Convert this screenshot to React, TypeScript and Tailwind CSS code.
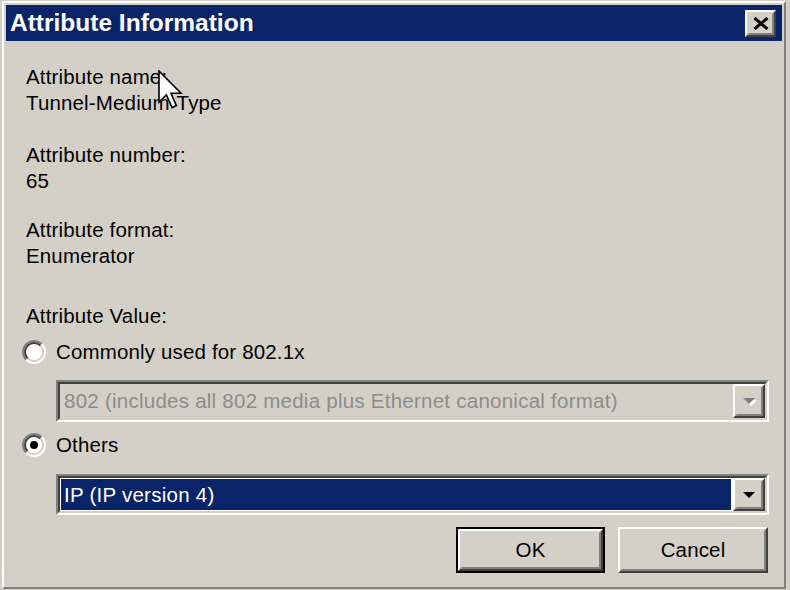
import React from "react";

function Raised({ children, className = "" }: { children?: React.ReactNode; className?: string }) {
  return (
    <div className={"border-2 border-t-white border-l-white border-r-[#404040] border-b-[#404040] bg-[#d4d0c8] " + className}>
      <div className="w-full h-full border-2 border-t-[#d4d0c8] border-l-[#d4d0c8] border-r-[#808080] border-b-[#808080] flex items-center justify-center">
        {children}
      </div>
    </div>
  );
}

function Arrow({ disabled }: { disabled?: boolean }) {
  return (
    <svg width="16" height="10" viewBox="0 0 16 10">
      {disabled && <polygon points="4,4 16,4 10,10" fill="#ffffff" />}
      <polygon points="2,2 14,2 8,8" fill={disabled ? "#808080" : "#000000"} />
    </svg>
  );
}

function Combo({ disabled, text }: { disabled?: boolean; text: string }) {
  return (
    <div className="h-full border-2 border-t-[#808080] border-l-[#808080] border-b-white border-r-white">
      <div className={"h-full border-2 border-t-[#404040] border-l-[#404040] border-b-[#d4d0c8] border-r-[#d4d0c8] flex " + (disabled ? "bg-[#d4d0c8]" : "bg-white")}>
        <div className="flex-1 flex p-[1px] pr-[2px]">
          <div className={"flex-1 flex items-center pl-[3px] text-[20.5px] tracking-[0.25px] " + (disabled ? "text-[#8c8c8c]" : "bg-[#0a246a] text-white")}>
            {text}
          </div>
        </div>
        <Raised className="w-[32px] h-full">
          <Arrow disabled={disabled} />
        </Raised>
      </div>
    </div>
  );
}

function Radio({ checked }: { checked?: boolean }) {
  const c = 12;
  const p = (r: number) => {
    const d = r * 0.7071;
    return {
      ul: `M ${c - d} ${c + d} A ${r} ${r} 0 0 1 ${c + d} ${c - d}`,
      lr: `M ${c + d} ${c - d} A ${r} ${r} 0 0 1 ${c - d} ${c + d}`,
    };
  };
  const o = p(11);
  const i = p(9);
  return (
    <svg width="24" height="24" viewBox="0 0 24 24">
      <circle cx="12" cy="12" r="9" fill="#ffffff" />
      <path d={o.ul} stroke="#808080" strokeWidth="2" fill="none" />
      <path d={o.lr} stroke="#ffffff" strokeWidth="2" fill="none" />
      <path d={i.ul} stroke="#404040" strokeWidth="2" fill="none" />
      <path d={i.lr} stroke="#d4d0c8" strokeWidth="2" fill="none" />
      {checked && <circle cx="12" cy="12" r="4" fill="#000000" />}
    </svg>
  );
}

export default function App() {
  return (
    <div className="relative w-[790px] h-[590px] overflow-hidden bg-[#d4d0c8] pl-[2px] pt-[1px] font-['Liberation_Sans',Arial,sans-serif] text-black">
      <div className="w-[784px] h-[588px] border-2 border-t-white border-l-white border-r-[#808080] border-b-[#808080] p-[2px] flex flex-col">
        {/* Title bar */}
        <div className="h-[36px] bg-[#0a246a] flex items-center justify-between pl-[4px] pr-[6px]">
          <span className="text-white font-bold text-[24.5px] leading-none">Attribute Information</span>
          <Raised className="w-[31px] h-[27px]">
            <svg width="16" height="13" viewBox="0 0 16 13">
              <path d="M1.5 1 L14.5 12 M14.5 1 L1.5 12" stroke="#000" strokeWidth="3" />
            </svg>
          </Raised>
        </div>

        {/* Body */}
        <div className="flex flex-col pl-[20px] pr-[13px] text-[20.5px] leading-[26px] tracking-[0.15px]">
          <div className="mt-[23px]">
            <div>Attribute name:</div>
            <div>Tunnel-Medium-Type</div>
          </div>
          <div className="mt-[26px]">
            <div>Attribute number:</div>
            <div>65</div>
          </div>
          <div className="mt-[23px]">
            <div>Attribute format:</div>
            <div>Enumerator</div>
          </div>
          <div className="mt-[34px]">Attribute Value:</div>

          <div className="mt-[10px] h-[26px] flex items-center -ml-[4px] gap-[10px]">
            <Radio />
            <span>Commonly used for 802.1x</span>
          </div>
          <div className="mt-[15px] h-[42px] ml-[30px]">
            <Combo disabled text="802 (includes all 802 media plus Ethernet canonical format)" />
          </div>

          <div className="mt-[10px] h-[26px] flex items-center -ml-[4px] gap-[10px]">
            <Radio checked />
            <span>Others</span>
          </div>
          <div className="mt-[16px] h-[41px] ml-[30px]">
            <Combo text="IP (IP version 4)" />
          </div>

          <div className="mt-[12px] flex justify-end gap-[13px] pr-[1px]">
            <div className="w-[149px] h-[46px] border-2 border-black">
              <Raised className="w-full h-full">
                <span>OK</span>
              </Raised>
            </div>
            <Raised className="w-[150px] h-[46px]">
              <span>Cancel</span>
            </Raised>
          </div>
        </div>
      </div>

      {/* Mouse cursor */}
      <svg className="absolute left-[158px] top-[70px]" width="25" height="40" viewBox="0 0 12.5 20">
        <path d="M0.5 0.5 L0.5 16 L4.2 12.4 L7 18.8 L9.2 17.8 L6.5 11.6 L11.5 11.6 Z" fill="#ffffff" stroke="#000000" strokeWidth="0.8" strokeLinejoin="miter" />
      </svg>
    </div>
  );
}
